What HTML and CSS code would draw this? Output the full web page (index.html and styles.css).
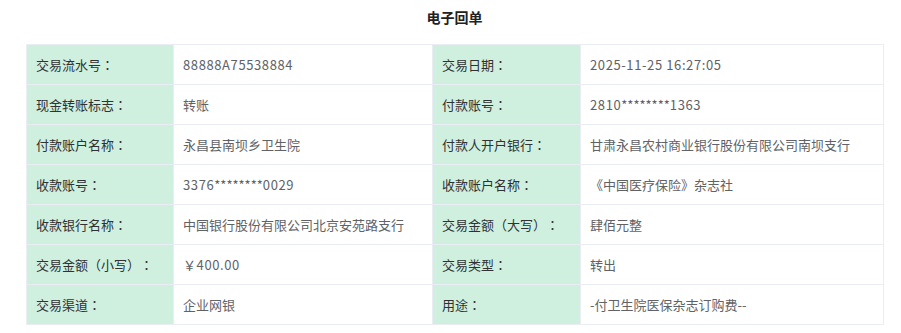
FILE: index.html
```html
<!DOCTYPE html>
<html lang="zh-CN">
<head>
<meta charset="utf-8">
<title>电子回单</title>
<link rel="stylesheet" href="styles.css">
</head>
<body>
<div class="receipt">
  <h1 class="title">电子回单</h1>
  <table class="detail">
    <colgroup>
      <col class="c-label1">
      <col class="c-value1">
      <col class="c-label2">
      <col class="c-value2">
    </colgroup>
    <tbody>
      <tr>
        <td class="label">交易流水号<span class="p" lang="zh-TW">：</span></td><td class="value num">88888A75538884</td>
        <td class="label">交易日期<span class="p" lang="zh-TW">：</span></td><td class="value num">2025-11-25 16:27:05</td>
      </tr>
      <tr>
        <td class="label">现金转账标志<span class="p" lang="zh-TW">：</span></td><td class="value">转账</td>
        <td class="label">付款账号<span class="p" lang="zh-TW">：</span></td><td class="value num">2810<span class="mask">********</span>1363</td>
      </tr>
      <tr>
        <td class="label">付款账户名称<span class="p" lang="zh-TW">：</span></td><td class="value">永昌县南坝乡卫生院</td>
        <td class="label">付款人开户银行<span class="p" lang="zh-TW">：</span></td><td class="value">甘肃永昌农村商业银行股份有限公司南坝支行</td>
      </tr>
      <tr>
        <td class="label">收款账号<span class="p" lang="zh-TW">：</span></td><td class="value num">3376<span class="mask">********</span>0029</td>
        <td class="label">收款账户名称<span class="p" lang="zh-TW">：</span></td><td class="value">《中国医疗保险》杂志社</td>
      </tr>
      <tr>
        <td class="label">收款银行名称<span class="p" lang="zh-TW">：</span></td><td class="value">中国银行股份有限公司北京安苑路支行</td>
        <td class="label">交易金额<span class="p" lang="zh-TW">（</span>大写<span class="p" lang="zh-TW">）：</span></td><td class="value">肆佰元整</td>
      </tr>
      <tr>
        <td class="label">交易金额<span class="p" lang="zh-TW">（</span>小写<span class="p" lang="zh-TW">）：</span></td><td class="value num">￥400.00</td>
        <td class="label">交易类型<span class="p" lang="zh-TW">：</span></td><td class="value">转出</td>
      </tr>
      <tr>
        <td class="label">交易渠道<span class="p" lang="zh-TW">：</span></td><td class="value">企业网银</td>
        <td class="label">用途<span class="p" lang="zh-TW">：</span></td><td class="value">-付卫生院医保杂志订购费--</td>
      </tr>
    </tbody>
  </table>
</div>
</body>
</html>
```

FILE: styles.css
```css
html, body {
  margin: 0;
  padding: 0;
  background: #ffffff;
}

body {
  font-family: "Noto Sans CJK SC", "Noto Sans", sans-serif;
  font-size: 13px;
  color: #333333;
  text-spacing-trim: space-all;
}

.receipt {
  padding: 7px 18px 0 26px;
}

.title {
  margin: 0 0 17px 0;
  font-size: 14px;
  line-height: 20px;
  font-weight: bold;
  text-align: center;
  color: #222222;
}

.detail {
  width: 857px;
  border-collapse: collapse;
  table-layout: fixed;
}

.c-label1 { width: 147px; }
.c-value1 { width: 259px; }
.c-label2 { width: 148px; }
.c-value2 { width: 303px; }

.detail td {
  border: 1px solid #ebedf5;
  height: 39px;
  padding: 0 9px;
  box-sizing: content-box;
  vertical-align: middle;
  white-space: nowrap;
  line-height: 18px;
}

.detail .label {
  background: #cff0df;
  color: #303133;
}

.detail .value {
  background: #ffffff;
  color: #606266;
}

.detail .num {
  letter-spacing: 0.6px;
}

.detail .mask {
  letter-spacing: 0;
}

.p {
  font-family: "Noto Sans CJK TC", sans-serif;
}
```
